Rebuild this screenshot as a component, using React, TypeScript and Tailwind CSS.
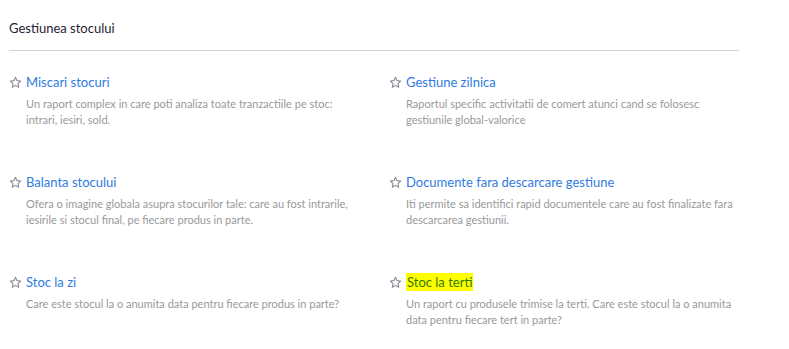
const reports = [
  {
    title: "Miscari stocuri",
    text: "Un raport complex in care poti analiza toate tranzactiile pe stoc: intrari, iesiri, sold.",
  },
  {
    title: "Gestiune zilnica",
    text: "Raportul specific activitatii de comert atunci cand se folosesc gestiunile global-valorice",
  },
  {
    title: "Balanta stocului",
    text: "Ofera o imagine globala asupra stocurilor tale: care au fost intrarile, iesirile si stocul final, pe fiecare produs in parte.",
  },
  {
    title: "Documente fara descarcare gestiune",
    text: "Iti permite sa identifici rapid documentele care au fost finalizate fara descarcarea gestiunii.",
  },
  {
    title: "Stoc la zi",
    text: "Care este stocul la o anumita data pentru fiecare produs in parte?",
  },
  {
    title: "Stoc la terti",
    text: "Un raport cu produsele trimise la terti. Care este stocul la o anumita data pentru fiecare tert in parte?",
    highlight: true,
  },
];

function StarIcon() {
  return (
    <svg width="13" height="13" viewBox="0 0 24 24" fill="none" stroke="#8a8a96" strokeWidth="2" strokeLinejoin="round">
      <path d="M12 2.5l2.9 6.1 6.6.8-4.9 4.6 1.3 6.6L12 17.3l-5.9 3.3 1.3-6.6-4.9-4.6 6.6-.8z" />
    </svg>
  );
}

export default function App() {
  return (
    <div className="h-[349px] w-[789px] overflow-hidden bg-white font-['Lato',sans-serif]">
      <div className="w-[739px] pl-[9px] pt-[19px]">
        <h1 className="text-[13px] leading-[18px] text-[#1f2233]">Gestiunea stocului</h1>
        <div className="mt-[13px] h-px bg-[#d4d4d4]" />
        <div className="mt-[22px] grid grid-cols-[380px_1fr] auto-rows-[100px]">
          {reports.map((r) => (
            <div key={r.title}>
              <div className="flex items-center gap-[4px]">
                <span className="flex h-[18px] w-[13px] items-center">
                  <StarIcon />
                </span>
                <a
                  className={
                    r.highlight
                      ? "bg-[#ffff00] px-px text-[13px] leading-[18px] text-[#2f7b00]"
                      : "text-[13px] leading-[18px] text-[#2f7be0]"
                  }
                >
                  {r.title}
                </a>
              </div>
              <p className="mt-[5px] ml-[17px] max-w-[334px] text-[11px] leading-[16px] text-[#999]">{r.text}</p>
            </div>
          ))}
        </div>
      </div>
    </div>
  );
}
